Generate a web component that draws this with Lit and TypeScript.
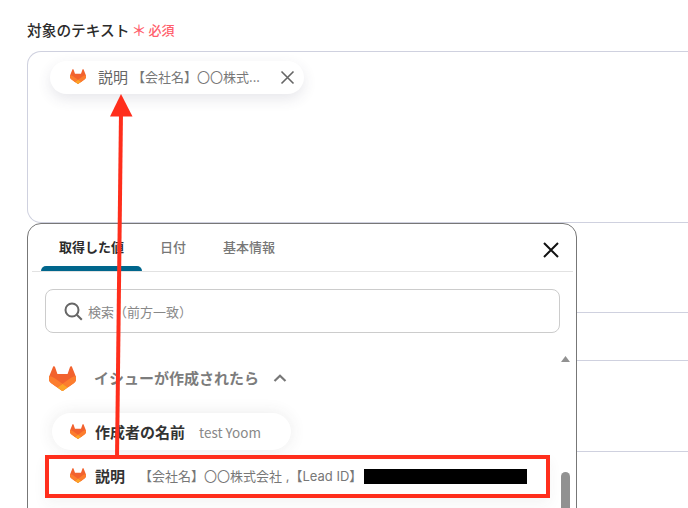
import { LitElement, html, css } from "lit";
import { customElement } from "lit/decorators.js";

const logo = (cls: string) => html`<svg class=${cls} viewBox="95 96 190 187" preserveAspectRatio="none" aria-hidden="true">
  <path d="M282.83,170.73l-.27-.69-26.14-68.22a6.81,6.81,0,0,0-2.69-3.24,7,7,0,0,0-8,.43,7,7,0,0,0-2.32,3.52l-17.65,54H154.29l-17.65-54A6.86,6.86,0,0,0,134.32,99a7,7,0,0,0-8-.43,6.87,6.87,0,0,0-2.69,3.24L97.44,170l-.26.69a48.54,48.54,0,0,0,16.1,56.1l.09.07.24.17,39.82,29.82,19.7,14.91,12,9.06a8.07,8.07,0,0,0,9.76,0l12-9.06,19.7-14.91,40.06-30,.1-.08A48.56,48.56,0,0,0,282.83,170.73Z" fill="#f2622e"/>
  <path d="M282.83,170.73l-.27-.69a88.3,88.3,0,0,0-35.15,15.8L190,229.25c19.55,14.79,36.57,27.64,36.57,27.64l40.06-30,.1-.08A48.56,48.56,0,0,0,282.83,170.73Z" fill="#fc7d2e"/>
  <path d="M153.43,256.89l19.7,14.91,12,9.06a8.07,8.07,0,0,0,9.76,0l12-9.06,19.7-14.91S209.55,244,190,229.25C170.45,244,153.43,256.89,153.43,256.89Z" fill="#fca326"/>
  <path d="M132.58,185.84A88.19,88.19,0,0,0,97.44,170l-.26.69a48.54,48.54,0,0,0,16.1,56.1l.09.07.24.17,39.82,29.82s17-12.85,36.57-27.64Z" fill="#fc7d2e"/>
</svg>`;

@customElement("app-root")
export class AppRoot extends LitElement {
  static styles = css`
    :host {
      display: block;
      width: 688px;
      height: 508px;
      position: relative;
      overflow: hidden;
      background: #fff;
      font-family: "Noto Sans CJK JP", "Noto Sans", sans-serif;
      color: #333;
    }
    .page { padding: 19px 0 0 27px; display: flex; flex-direction: column; }
    .label { display: flex; align-items: center; height: 20px; padding-bottom: 2px; font-size: 14.7px; font-weight: 500; color: #2b2b2b; white-space: nowrap; }
    .star { color: #ff5f6d; font-size: 15px; margin-left: 2px; width: 17px; }
    .req { color: #ff5f6d; font-size: 13px; font-weight: 500; }
    .box {
      margin-top: 10px; height: 161px; border: 1px solid #cfd1df; border-right: 0;
      border-radius: 14px 0 0 14px; padding: 9px 0 0 22px; box-sizing: content-box;
    }
    .chip {
      display: flex; align-items: center; width: 254px; height: 33px; border-radius: 17px;
      background: #fff; box-shadow: 0 5px 14px rgba(60, 60, 90, 0.12); box-sizing: border-box; padding: 0 0 1px 20px;
    }
    .chip .ic { width: 16px; height: 15px; flex: none; margin-bottom: 1px; }
    .chip .nm { font-size: 15px; color: #666; margin-left: 12px; flex: none; padding-bottom: 2px; }
    .chip .val { font-size: 13px; color: #777; margin-left: 4px; width: 130px; white-space: nowrap; overflow: hidden; padding-bottom: 2px; }
    .chip .x { width: 15px; height: 15px; margin-left: 18px; flex: none; }
    .rule { height: 1px; background: #cfd1df; margin-left: 550px; }
    .r1 { margin-top: 89px; }
    .r2 { margin-top: 47px; }
    .r3 { margin-top: 90px; }

    .panel {
      position: absolute; left: 27px; top: 223px; width: 550px; height: 300px; box-sizing: border-box;
      border: 1px solid #777; border-radius: 14px; background: #fff; display: flex; flex-direction: column;
    }
    .tabs {
      display: flex; height: 47px; margin: 0 3px 0 4px; border-bottom: 1px solid #e2e2e2; position: relative; flex: none;
      font-size: 13px; color: #777; font-weight: 500;
    }
    .tab { display: flex; align-items: center; justify-content: center; height: 47px; padding-bottom: 2px; box-sizing: border-box; position: relative; }
    .t1 { width: 101px; margin-left: 9px; color: #2c2c2c; font-weight: 700; }
    .t1::after { content: ""; position: absolute; left: 0; right: 0; bottom: 0; height: 5px; background: #00668c; border-radius: 5px 5px 0 0; }
    .t2 { margin-left: 18px; }
    .t3 { margin-left: 37px; }
    .close { position: absolute; right: 14px; top: 18px; width: 16px; height: 16px; }
    .search {
      flex: none; margin: 17px 0 0 17px; width: 515px; height: 44px; box-sizing: border-box;
      border: 1px solid #ccc; border-radius: 8px; display: flex; align-items: center; padding-left: 18px;
      font-size: 13px; color: #888;
    }
    .search svg { width: 19px; height: 19px; margin-right: 5px; flex: none; }
    .sec { flex: none; display: flex; align-items: center; height: 28px; margin: 31px 0 0 21px; }
    .sec .ic { width: 27px; height: 25px; flex: none; }
    .sec .t { font-size: 15px; font-weight: 700; color: #7c7c7c; margin-left: 18px; white-space: nowrap; padding-bottom: 2px; }
    .sec svg.chev { width: 14px; height: 8px; margin-left: 14px; flex: none; }
    .item { display: flex; align-items: center; white-space: nowrap; }
    .item .ic { width: 16px; height: 15px; flex: none; }
    .item .nm { font-size: 15px; font-weight: 700; color: #333; margin-left: 9px; }
    .pill {
      flex: none; width: 239px; height: 37px; margin: 21px 0 0 24px; border-radius: 19px; padding-left: 18px;
      box-sizing: border-box; background: #fff; box-shadow: 0 0 16px rgba(60, 60, 60, 0.1);
    }
    .pill .val { font-size: 13.5px; color: #888; margin-left: 14px; padding-top: 1px; }
    .row {
      flex: none; width: 505px; height: 43px; margin: 5px 0 0 17px; box-sizing: border-box; background: #fff;
      border: 4px solid #ff2e1c; padding: 0 0 3px 21px; box-shadow: 0 6px 14px rgba(60, 60, 60, 0.05);
    }
    .row .val { font-family: Inter, "Noto Sans CJK JP", sans-serif; font-size: 13px; color: #777; margin-left: 14px; }
    .redact { width: 163px; height: 15px; background: #000; margin: 3px 0 0 2px; flex: none; }
    .up { position: absolute; left: 533px; top: 132px; width: 9px; height: 6px; }
    .thumb { position: absolute; left: 533px; top: 248px; width: 9px; height: 60px; background: #919191; border-radius: 5px; }
    .arrow { position: absolute; left: 0; top: 0; width: 688px; height: 508px; pointer-events: none; }
  `;

  render() {
    return html`
      <div class="page">
        <div class="label">対象のテキスト<span class="star">＊</span><span class="req">必須</span></div>
        <div class="box">
          <div class="chip">
            ${logo("ic")}
            <span class="nm">説明</span>
            <span class="val">【会社名】〇〇株式...</span>
            <svg class="x" viewBox="0 0 15 15"><path d="M1.500 1.500l12 12M13.500 1.500l-12 12" stroke="#666" stroke-width="1.6" fill="none"/></svg>
          </div>
        </div>
        <div class="rule r1"></div>
        <div class="rule r2"></div>
        <div class="rule r3"></div>
      </div>

      <div class="panel">
        <div class="tabs">
          <div class="tab t1">取得した値</div>
          <div class="tab t2">日付</div>
          <div class="tab t3">基本情報</div>
          <svg class="close" viewBox="0 0 16 16"><path d="M1 1l14 14M15 1L1 15" stroke="#111" stroke-width="2" fill="none"/></svg>
        </div>
        <div class="search">
          <svg viewBox="0 0 19 19"><circle cx="8" cy="8" r="6.500" stroke="#666" stroke-width="2" fill="none"/><path d="M12.800 12.800l5 5" stroke="#666" stroke-width="2" fill="none"/></svg>
          検索（前方一致）
        </div>
        <div class="sec">
          ${logo("ic")}
          <span class="t">イシューが作成されたら</span>
          <svg class="chev" viewBox="0 0 14 8"><path d="M1.500 7L7 1.800 12.500 7" stroke="#777" stroke-width="2.200" fill="none"/></svg>
        </div>
        <div class="item pill">
          ${logo("ic")}
          <span class="nm">作成者の名前</span>
          <span class="val">test Yoom</span>
        </div>
        <div class="item row">
          ${logo("ic")}
          <span class="nm">説明</span>
          <span class="val">【会社名】〇〇株式会社 ,【Lead ID】</span>
          <span class="redact"></span>
        </div>
        <svg class="up" viewBox="0 0 9 6"><path d="M4.500 0L9 6H0z" fill="#919191"/></svg>
        <div class="thumb"></div>
      </div>

      <svg class="arrow" viewBox="0 0 688 508">
        <path d="M117 458L121 112" stroke="#ff2e1c" stroke-width="4" fill="none"/>
        <path d="M121 94L132.500 116.500H110z" fill="#ff2e1c"/>
      </svg>
    `;
  }
}
